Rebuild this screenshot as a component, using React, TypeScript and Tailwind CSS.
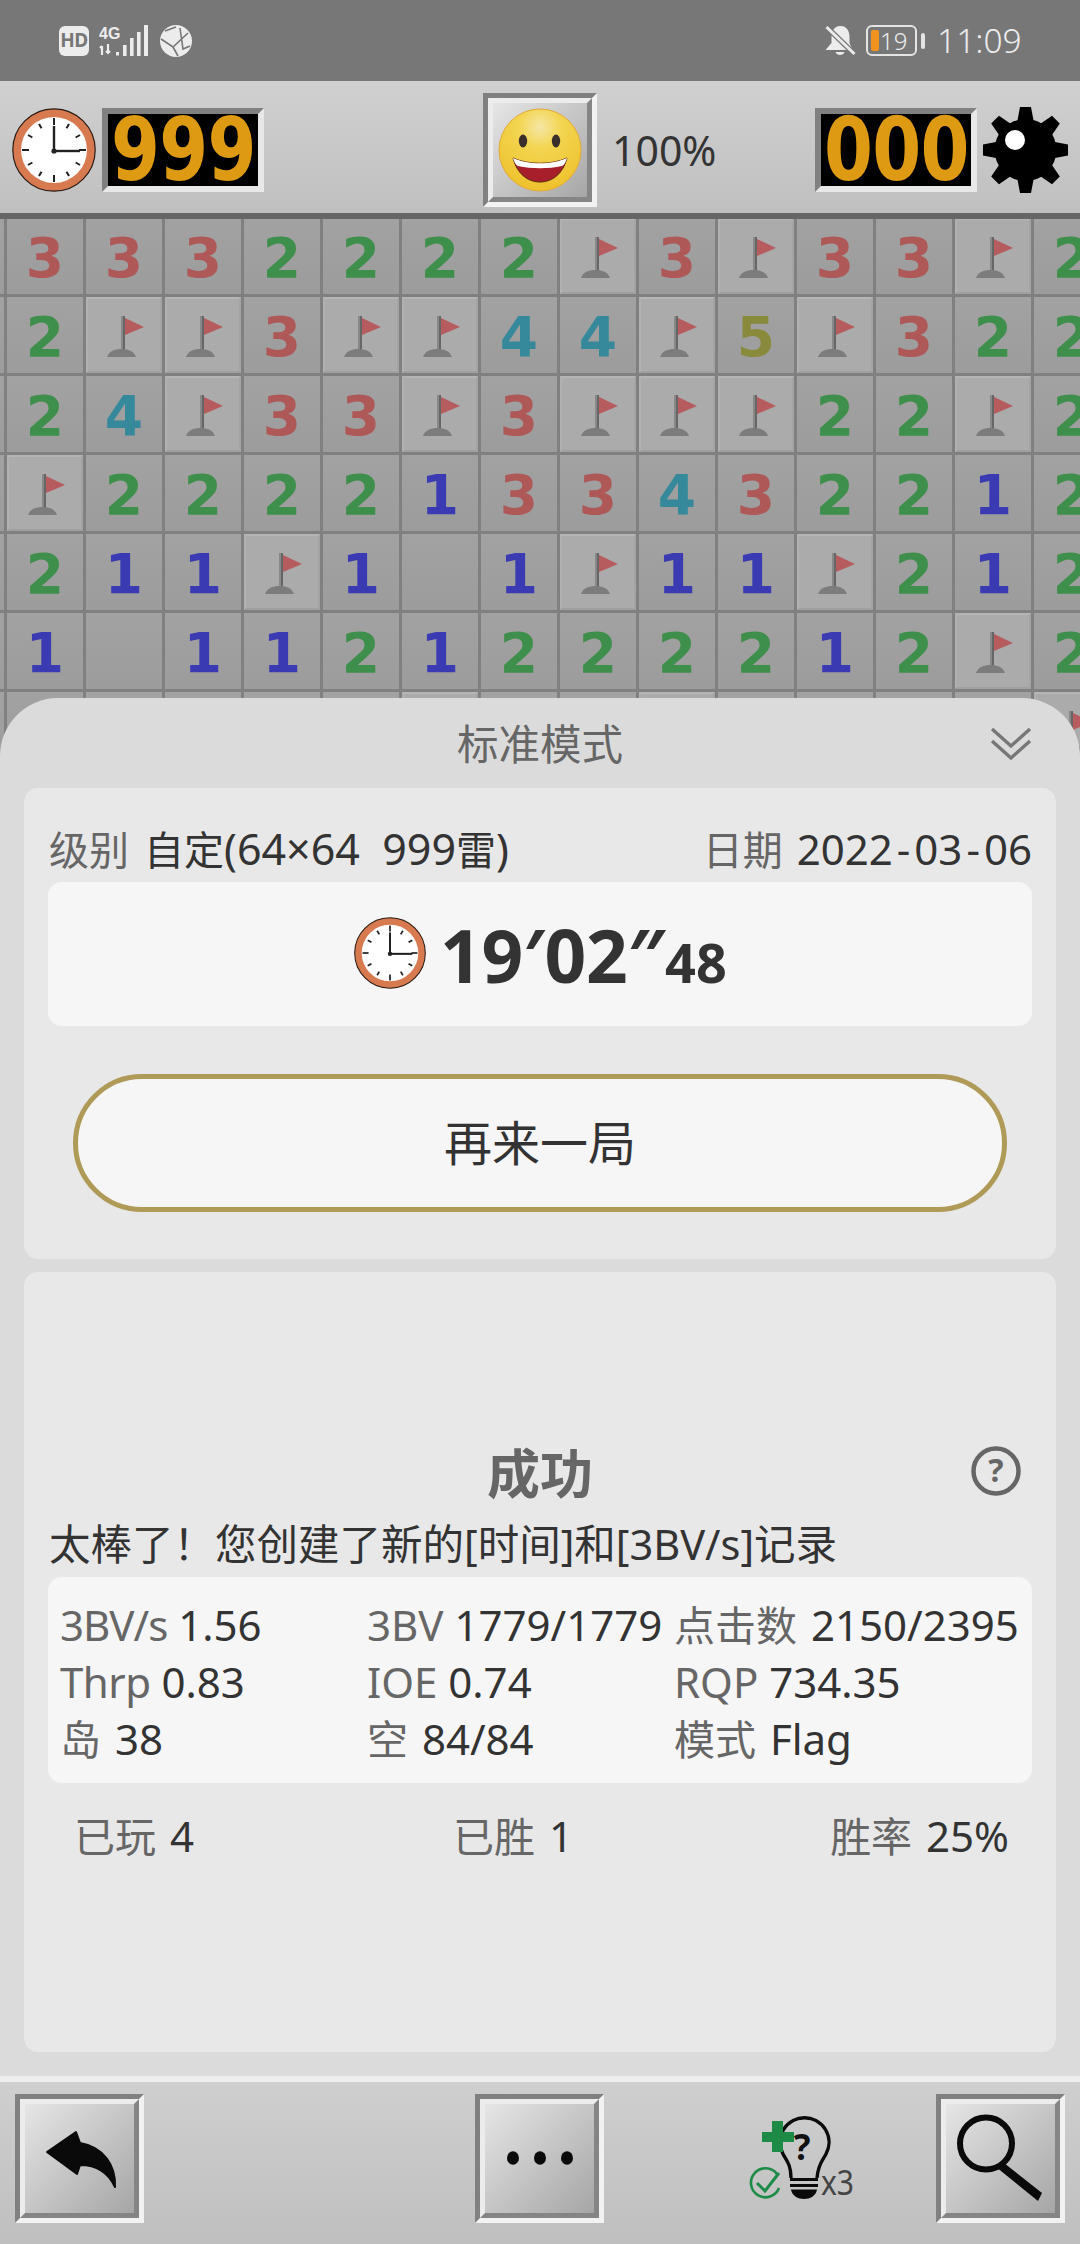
import React from "react";

const SANS = "font-['Noto_Sans','Noto_Sans_CJK_SC',sans-serif]";

const rows = [
  "3332222F3F33F2",
  "2FF3FF44F5F322",
  "24F33F3FFF22F2",
  "F2222133432212",
  "211F1 1F11F212",
  "1 11212222 12F2".replace("222 ", "222"),
  "    2F22F2222F",
  "              ",
];

const numColor: Record<string, string> = {
  "1": "text-[#3a3ab2]",
  "2": "text-[#3f8f4c]",
  "3": "text-[#ae5858]",
  "4": "text-[#35899b]",
  "5": "text-[#8a8a3c]",
};

function FlagIcon() {
  return (
    <svg width="76" height="76" viewBox="0 0 76 76">
      <rect x="35" y="19" width="2" height="36" fill="#888888" />
      <rect x="37" y="19" width="2" height="36" fill="#666666" />
      <polygon points="39,21 58,30 39,38" fill="#b65c5e" />
      <path d="M21 60 C23 54 29 52 35.5 52 C42 52 48 54 50 60 Z" fill="#7c7c7c" />
    </svg>
  );
}

function Cell({ c }: { c: string }) {
  if (c === "F") {
    return (
      <div className="w-[76px] h-[76px] bg-[#ababab] border-2 border-t-[#b5b5b5] border-l-[#b1b1b1] border-b-[#a0a0a0] border-r-[#a4a4a4] flex items-center justify-center overflow-hidden">
        <div className="shrink-0 -mx-2">
          <FlagIcon />
        </div>
      </div>
    );
  }
  return (
    <div
      className={`w-[76px] h-[76px] bg-gradient-to-b from-[#a2a2a2] to-[#9c9c9c] flex items-center justify-center font-['DejaVu_Sans',sans-serif] font-bold text-[55px] leading-none pt-[5px] ${
        numColor[c] ?? ""
      }`}
    >
      {c === " " ? "" : c}
    </div>
  );
}

function Clock({ size }: { size: number }) {
  const ticks = Array.from({ length: 12 }, (_, i) => i * 30);
  return (
    <svg width={size} height={size} viewBox="0 0 84 84" className="shrink-0">
      <circle cx="42" cy="42" r="41.2" fill="#d87a50" stroke="#2a1a14" strokeWidth="1.2" />
      <circle cx="42" cy="42" r="33" fill="#ffffff" />
      {ticks.map((a) => (
        <line
          key={a}
          x1="42"
          y1={a % 90 === 0 ? 10 : 12}
          x2="42"
          y2="17"
          stroke="#222"
          strokeWidth="2"
          transform={`rotate(${a} 42 42)`}
        />
      ))}
      <line x1="42" y1="43" x2="42" y2="18" stroke="#222" strokeWidth="2.4" />
      <line x1="42" y1="43" x2="68" y2="43" stroke="#222" strokeWidth="2.4" />
      <circle cx="42" cy="43" r="2.6" fill="#222" />
    </svg>
  );
}

function Counter({ value }: { value: string }) {
  return (
    <div className="w-[162px] h-[84px] shrink-0 border-[6px] border-t-[#808080] border-l-[#808080] border-b-[#e8e8e8] border-r-[#e8e8e8] bg-black flex items-center justify-center overflow-hidden">
      <span className="font-['DejaVu_Sans',sans-serif] font-bold text-[88px] leading-[72px] tracking-[-1px] text-[#dd9a12] scale-x-[0.8] inline-block shrink-0 whitespace-nowrap">
        {value}
      </span>
    </div>
  );
}

function Smile() {
  return (
    <svg width="84" height="84" viewBox="0 0 84 84">
      <defs>
        <radialGradient id="sm" cx="50%" cy="22%" r="75%">
          <stop offset="0%" stopColor="#f5e7a6" />
          <stop offset="35%" stopColor="#f3d550" />
          <stop offset="100%" stopColor="#eec22e" />
        </radialGradient>
      </defs>
      <circle cx="42" cy="42" r="41" fill="url(#sm)" stroke="#e3a93a" strokeWidth="1" />
      <ellipse cx="25" cy="33" rx="4.2" ry="6.5" fill="#3a2f2a" />
      <ellipse cx="58" cy="33" rx="4.2" ry="6.5" fill="#3a2f2a" />
      <path d="M15 50 C30 57 54 57 69 50 C65 66 54 74 42 74 C30 74 19 66 15 50 Z" fill="#a81f2c" stroke="#5c2a12" strokeWidth="1" />
      <path d="M15 50 C30 57 54 57 69 50 C68 54 66 57 64 58 C50 61 34 61 20 58 C18 57 16 54 15 50 Z" fill="#ffffff" />
    </svg>
  );
}

function Gear() {
  const a = [0, 45, 90, 135, 180, 225, 270, 315];
  return (
    <svg width="85" height="86" viewBox="0 0 85 86" className="shrink-0">
      <circle cx="42.5" cy="43" r="31" fill="#000" />
      {a.map((r) => (
        <polygon key={r} points="34,16 37,0 48,0 51,16" fill="#000" transform={`rotate(${r} 42.5 43)`} />
      ))}
      <circle cx="32" cy="33" r="10" fill="#fff" />
    </svg>
  );
}

function Bevel({ w, h, children }: { w: string; h: string; children: React.ReactNode }) {
  return (
    <div className={`${w} ${h} shrink-0 border-[5px] border-t-[#808080] border-l-[#808080] border-b-[#f2f2f2] border-r-[#f2f2f2]`}>
      <div className="w-full h-full border-[5px] border-t-[#ececec] border-l-[#ececec] border-b-[#858585] border-r-[#858585] bg-gradient-to-br from-[#e6e6e6] to-[#a6a6a6] flex items-center justify-center overflow-hidden">
        {children}
      </div>
    </div>
  );
}

function StatusBar() {
  return (
    <div className={`h-[81px] shrink-0 bg-[#777777] flex items-center pl-[59px] pr-[60px] ${SANS}`}>
      <div className="w-[30px] h-[30px] rounded-[6px] bg-[#ececec] text-[#777] font-bold text-[19px] leading-none flex items-center justify-center tracking-tight">
        HD
      </div>
      <svg width="52" height="32" viewBox="0 0 52 32" className="ml-[10px]">
        <text x="0" y="14" fontSize="16" fontWeight="700" fill="#ececec" fontFamily="'Liberation Sans Narrow','Liberation Sans',sans-serif">4G</text>
        <path d="M3 21 v9 M1 23 l2 -2 M9 19 v9 M7 26 l2 2 l2 -2" stroke="#ececec" strokeWidth="2.2" fill="none" />
        <rect x="17" y="27" width="3" height="3.5" fill="#ececec" />
        <rect x="24" y="20" width="3.6" height="11" fill="#ececec" />
        <rect x="31" y="13" width="3.6" height="18" fill="#ececec" />
        <rect x="38" y="7" width="3.6" height="24" fill="#ececec" />
        <rect x="45" y="0" width="4" height="31" fill="#ececec" />
      </svg>
      <svg width="32" height="32" viewBox="0 0 32 32" className="ml-[9px]">
        <circle cx="16" cy="16" r="16" fill="#ececec" />
        <path d="M1 14 L13 22 L28 8 M13 22 L18 31 M20 3 L23 24 L30 21 M5 6 L16 2" stroke="#777" strokeWidth="1.6" fill="none" />
      </svg>
      <div className="ml-auto flex items-center">
        <svg width="31" height="31" viewBox="0 0 30 31">
          <path d="M15 1 C8 1 6 7 6 12 L6 18 L0 25 L27 25 L24 18 L24 12 C24 7 22 1 15 1 Z" fill="#ececec" />
          <path d="M10 27 C11 31 18 31 19 27 Z" fill="#ececec" />
          <path d="M0 1 L30 30" stroke="#777" strokeWidth="5.5" />
          <path d="M1 2 L29 29" stroke="#ececec" strokeWidth="3" />
        </svg>
        <div className="ml-[10px] w-[51px] h-[31px] rounded-[6px] border-[2px] border-[#e4e4e4] flex items-center pl-[3px]">
          <div className="w-[8px] h-[21px] rounded-[2px] bg-[#f0921e] shrink-0" />
          <span className="text-[#ececec] text-[24px] leading-none ml-[1px] font-light">19</span>
        </div>
        <div className="ml-[4px] w-[4px] h-[16px] rounded-[2px] bg-[#e4e4e4]" />
        <span className="ml-[12px] w-[83px] text-[#ececec] text-[33.5px] leading-none font-light whitespace-nowrap">11:09</span>
      </div>
    </div>
  );
}

function Header() {
  return (
    <div className="relative z-10 h-[138px] shrink-0 border-b-[6px] border-b-[#666666] bg-gradient-to-b from-[#d0d0d0] to-[#c0c0c0] flex items-center pt-[6px]">
      <div className="ml-[12px]">
        <Clock size={84} />
      </div>
      <div className="ml-[6px]">
        <Counter value="999" />
      </div>
      <div className="ml-[219px]">
        <Bevel w="w-[114px]" h="h-[114px]">
          <div className="shrink-0">
            <Smile />
          </div>
        </Bevel>
      </div>
      <span className={`ml-[15px] text-[41px] leading-none text-[#333] ${SANS}`}>100%</span>
      <div className="ml-auto">
        <Counter value="000" />
      </div>
      <div className="ml-[6px] mr-[12px]">
        <Gear />
      </div>
    </div>
  );
}

function Board() {
  return (
    <div className="flex-1 min-h-0 overflow-hidden bg-[#808080]">
      <div className="grid grid-cols-[repeat(15,76px)] auto-rows-[76px] gap-[3px] -mt-px -ml-[72px]">
        {rows.map((r, i) => (
          <React.Fragment key={i}>
            <Cell c=" " />
            {r
              .padEnd(14, " ")
              .split("")
              .map((c, j) => (
                <Cell key={j} c={c} />
              ))}
          </React.Fragment>
        ))}
      </div>
    </div>
  );
}

function Stat({ k, v, cjk, tk }: { k: string; v: string; cjk?: boolean; tk?: string }) {
  return (
    <div className="whitespace-nowrap">
      <span className={`text-[#666] ${cjk ? "text-[41px] mr-[3px]" : ""} ${tk ?? ""}`}>{k}</span>
      <span className="text-[#333]"> {v}</span>
    </div>
  );
}

function Sheet() {
  return (
    <div className={`absolute left-0 right-0 top-[698px] h-[1378px] z-20 rounded-t-[58px] bg-[#dbdbdb] flex flex-col px-[24px] ${SANS}`}>
      <div className="relative h-[90px] shrink-0 flex items-center justify-center pt-[3px]">
        <span className="text-[41.5px] leading-none text-[#666]">标准模式</span>
        <svg width="42" height="36" viewBox="0 0 42 36" className="absolute right-[24px] top-[28px]">
          <path d="M2 3 L21 20 L40 3 M2 15 L21 32 L40 15" stroke="#777" strokeWidth="3.4" fill="none" />
        </svg>
      </div>

      <div className="h-[471px] shrink-0 rounded-[14px] bg-[#e8e8e8] px-[24px] pt-[37px] flex flex-col">
        <div className="h-[50px] shrink-0 flex items-center justify-between text-[40px] leading-none pl-[1px] pb-[3px] whitespace-nowrap">
          <div className="flex items-baseline">
            <span className="text-[#666] mr-[15px]">级别</span>
            <span className="text-[#333]">
              自定<span className="text-[43px]">(64×64&nbsp;&nbsp;999</span>雷<span className="text-[43px]">)</span>
            </span>
          </div>
          <div className="flex items-baseline">
            <span className="text-[#666] mr-[14px]">日期</span>
            <span className="text-[#333] text-[42px]">
              2022<span className="mx-[4px]">-</span>03<span className="mx-[4px]">-</span>06
            </span>
          </div>
        </div>
        <div className="mt-[7px] h-[144px] shrink-0 rounded-[14px] bg-[#f6f6f6] flex items-center justify-center">
          <div className="mt-[-3px] ml-[3px]">
            <Clock size={72} />
          </div>
          <div className="ml-[14px] flex items-baseline font-bold text-[#333] mr-[2px]">
            <span className="text-[73px] leading-none tracking-[-0.4px] whitespace-nowrap">19′02″</span>
            <span className="text-[54px] leading-none">48</span>
          </div>
        </div>
        <div className="mt-[48px] mx-[25px] h-[138px] shrink-0 rounded-full border-[5px] border-[#b09a58] bg-[#f6f6f6] flex items-center justify-center">
          <span className="text-[48px] leading-none text-[#333]">再来一局</span>
        </div>
      </div>

      <div className="mt-[13px] h-[780px] shrink-0 rounded-[14px] bg-[#e8e8e8] px-[24px] pt-[172px] flex flex-col relative">
        <div className="h-[60px] shrink-0 text-center font-bold text-[53px] leading-[60px] text-[#666]">成功</div>
        <svg width="50" height="50" viewBox="0 0 50 50" className="absolute right-[35px] top-[174px]">
          <circle cx="25" cy="25" r="22.5" stroke="#666" strokeWidth="4.5" fill="none" />
          <text x="25" y="36" textAnchor="middle" fontSize="32" fontWeight="700" fill="#666" fontFamily="'Noto Sans',sans-serif">?</text>
        </svg>
        <div className="mt-[15px] h-[50px] shrink-0 text-[41.5px] leading-[50px] text-[#333] pl-[1px] whitespace-nowrap">
          太棒了！您创建了新的[时间]和[3BV/s]记录
        </div>
        <div className="mt-[8px] h-[206px] shrink-0 rounded-[14px] bg-[#f6f6f6] pl-[12px] pt-[19px] grid grid-cols-[307px_307px_1fr] auto-rows-[57px] text-[42px] leading-[57px]">
          <Stat k="3BV/s" v="1.56" tk="tracking-[-1px]" />
          <Stat k="3BV" v="1779/1779" />
          <Stat k="点击数" v="2150/2395" cjk />
          <Stat k="Thrp" v="0.83" tk="tracking-[-0.5px]" />
          <Stat k="IOE" v="0.74" />
          <Stat k="RQP" v="734.35" />
          <Stat k="岛" v="38" cjk />
          <Stat k="空" v="84/84" cjk />
          <Stat k="模式" v="Flag" cjk />
        </div>
        <div className="mt-[28px] h-[50px] shrink-0 pl-[26px] pr-[23px] grid grid-cols-[379px_1fr_auto] items-center text-[42px] leading-none">
          <Stat k="已玩" v="4" cjk />
          <Stat k="已胜" v="1" cjk />
          <Stat k="胜率" v="25%" cjk />
        </div>
      </div>
    </div>
  );
}

function Footer() {
  return (
    <div className="relative z-30 h-[168px] shrink-0 border-t-[6px] border-t-[#eeeeee] bg-gradient-to-b from-[#cfcfcf] to-[#bfbfbf] flex items-start pt-[12px]">
      <div className="ml-[15px]">
        <Bevel w="w-[129px]" h="h-[129px]">
          <svg width="108" height="109" viewBox="0 0 108 109" className="shrink-0">
            <path d="M21 48 L50 28 L54 39 C78 43 90 62 89 83 C83 70 72 61 54 61 L51 70 Z" fill="#0a0a0a" stroke="#0a0a0a" strokeWidth="2" strokeLinejoin="round" />
          </svg>
        </Bevel>
      </div>
      <div className="ml-[331px]">
        <Bevel w="w-[129px]" h="h-[129px]">
          <svg width="108" height="109" viewBox="0 0 108 109" className="shrink-0">
            <ellipse cx="27" cy="54" rx="6" ry="6.8" fill="#0a0a0a" />
            <ellipse cx="54" cy="54" rx="6" ry="6.8" fill="#0a0a0a" />
            <ellipse cx="81" cy="54" rx="6" ry="6.8" fill="#0a0a0a" />
          </svg>
        </Bevel>
      </div>
      <svg width="130" height="110" viewBox="0 0 130 110" className="ml-[136px] mt-[6px] shrink-0">
        <path d="M51 78 C51 64 46 60 43 54 A24.5 24.5 0 1 1 86 54 C83 60 78 64 77 78" fill="none" stroke="#0a0a0a" strokeWidth="3.4" />
        <path d="M50 79.5 H78 M50 85.5 H78" stroke="#0a0a0a" strokeWidth="3.2" />
        <path d="M51 89.5 H77 C76 96 70 99 64 99 C58 99 52 96 51 89.5 Z" fill="#0a0a0a" />
        <text x="62" y="60" textAnchor="middle" fontSize="35" fontWeight="700" fill="#111" fontFamily="'Noto Sans',sans-serif">?</text>
        <path d="M32 21 H43 V32 H54 V42 H43 V52 H32 V42 H22 V32 H32 Z" fill="#1d8a46" />
        <path d="M37 74 A14.5 14.5 0 1 0 39 88" fill="none" stroke="#1d8a46" strokeWidth="2.6" />
        <path d="M17 83 L25 91 L39 73" fill="none" stroke="#1d8a46" strokeWidth="3" />
        <text x="81" y="95" fontSize="35" fill="#444" fontFamily="'Noto Sans',sans-serif" textLength="33" lengthAdjust="spacingAndGlyphs">x3</text>
      </svg>
      <div className="ml-[66px]">
        <Bevel w="w-[129px]" h="h-[129px]">
          <svg width="108" height="109" viewBox="0 0 108 109" className="shrink-0">
            <circle cx="39" cy="39.5" r="26" fill="none" stroke="#0a0a0a" strokeWidth="6" />
            <path d="M49 63 L57 59 L95 89 L91 97 Z" fill="#0a0a0a" />
          </svg>
        </Bevel>
      </div>
    </div>
  );
}

export default function App() {
  return (
    <div className="relative w-[1080px] h-[2244px] overflow-hidden flex flex-col bg-[#808080]">
      <StatusBar />
      <Header />
      <Board />
      <Footer />
      <Sheet />
    </div>
  );
}
